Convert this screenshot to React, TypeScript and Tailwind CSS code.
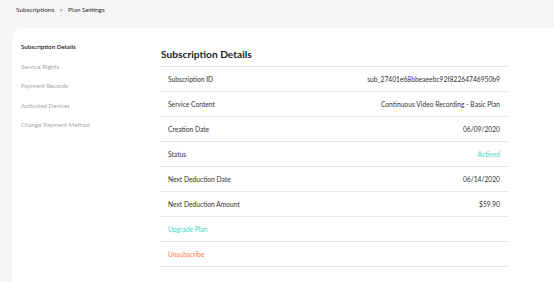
const rows: { label: string; value: string; tone?: string }[] = [
  { label: "Subscription ID", value: "sub_27401e68bbeaeebc92f82264746950b9" },
  { label: "Service Content", value: "Continuous Video Recording - Basic Plan" },
  { label: "Creation Date", value: "06/09/2020" },
  { label: "Status", value: "Actived", tone: "text-[#3fd8c9]" },
  { label: "Next Deduction Date", value: "06/14/2020" },
  { label: "Next Deduction Amount", value: "$59.90" },
];

const menu = ["Subscription Details", "Service Rights", "Payment Records", "Activated Devices", "Change Payment Method"];

export default function App() {
  return (
    <div className="w-[554px] h-[282px] overflow-hidden bg-[#f5f5f5] font-['Lato',sans-serif] text-[#333]">
      <div className="h-[28px] pl-[16px] pt-[5px] text-[6.5px] text-[#333] flex items-start gap-[5px] leading-[10px]">
        <span>Subscriptions</span>
        <span className="text-[#666]">&gt;</span>
        <span>Plan Settings</span>
      </div>
      <div className="ml-[12px] h-[254px] bg-white rounded-tl-[10px] flex">
        <div className="w-[148px] pl-[9px] pt-[14px] flex flex-col gap-[9.5px] text-[6.2px] leading-[10px]">
          {menu.map((m, i) => (
            <div key={m} className={i === 0 ? "text-[#222] font-semibold" : "text-[#a8a8a8]"}>
              {m}
            </div>
          ))}
        </div>
        <div className="w-[348px] pt-[17px]">
          <h1 className="text-[10.2px] font-bold leading-[18px] pl-[1px] pb-[3px] text-[#222]">Subscription Details</h1>
          <div className="border-t border-[#e6e6e6] text-[6.7px]">
            {rows.map((r) => (
              <div key={r.label} className="h-[25px] flex items-center justify-between px-[8px] border-b border-[#e6e6e6]">
                <span>{r.label}</span>
                <span className={r.tone ?? ""}>{r.value}</span>
              </div>
            ))}
            <div className="h-[25px] flex items-center px-[8px] border-b border-[#e6e6e6] text-[#3fd8c9]">Upgrade Plan</div>
            <div className="h-[25px] flex items-center px-[8px] border-b border-[#e6e6e6] text-[#ff7a45]">Unsubscribe</div>
          </div>
        </div>
      </div>
    </div>
  );
}
